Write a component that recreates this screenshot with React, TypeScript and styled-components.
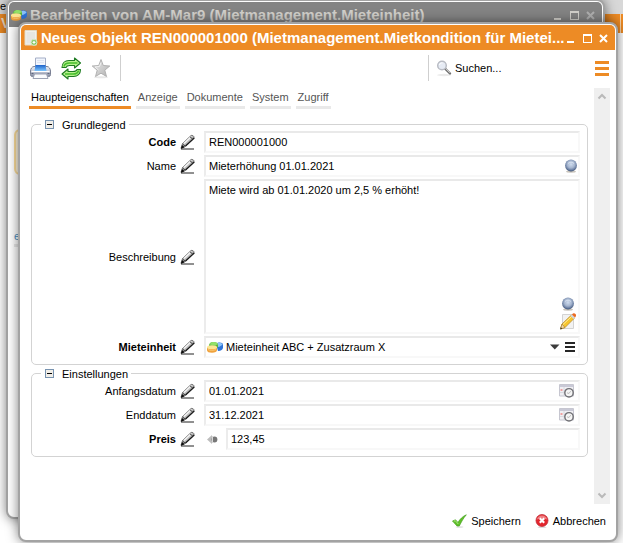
import React from "react";
import styled, { createGlobalStyle, css } from "styled-components";

const GlobalStyle = createGlobalStyle`
  *, *::before, *::after { box-sizing: border-box; }
  html, body { margin: 0; height: 100%; overflow: hidden; }
  body, button, input, textarea {
    font-family: "Liberation Sans", Arial, sans-serif;
    font-size: 11px;
    line-height: 14px;
    color: #000;
  }
`;

const orange = "#ed8b25";

/* ---------- desktop ---------- */

const Desktop = styled.main`
  position: relative;
  height: 100vh;
  overflow: hidden;
  background: #fff;
`;

const DesktopHead = styled.div`
  height: 14px;
  background: #d8d8d8;
  line-height: 13px;
`;

const DesktopBar = styled.div`
  display: flex;
  justify-content: space-between;
  height: 19px;
  padding: 0 2px 0 1px;
  background: ${orange};
  color: #f4e3cc;
  font-size: 14px;
  font-weight: bold;
  line-height: 19px;

  &::after {
    content: "";
    width: 1px;
    background: #f8d3a8;
  }
`;

const WindowFrame = styled.section<{ $front?: boolean }>`
  position: absolute;
  display: flex;
  flex-direction: column;
  padding: 1px;
  overflow: hidden;
  border: 2px solid #a3a3a3;
  border-radius: 8px;
  background: #fff;
  box-shadow: 0 0 12px rgba(0, 0, 0, 0.5);
  ${(p) =>
    p.$front
      ? css`
          inset: 22px 5px 1px 18px;
        `
      : css`
          inset: -1px 18px 24px 6px;
        `}
`;

const TitleBar = styled.header<{ $front?: boolean }>`
  display: flex;
  flex: none;
  align-items: center;
  height: 25px;
  padding: 0 7px 0 ${(p) => (p.$front ? 3 : 2)}px;
  border-radius: 5px 5px 0 0;
  background: ${(p) => (p.$front ? orange : "#848484")};
  color: ${(p) => (p.$front ? "#fff" : "#d2d0cb")};
`;

const Title = styled.h1`
  flex: 1;
  min-width: 0;
  margin: 0 0 0 3px;
  overflow: hidden;
  font-size: 15px;
  font-weight: bold;
  line-height: 20px;
  white-space: nowrap;
`;

const WindowButtons = styled.div`
  display: flex;
  gap: 7px;
`;

const IconButton = styled.button<{ $dim?: boolean }>`
  display: flex;
  flex: none;
  align-items: center;
  justify-content: center;
  padding: 0;
  border: 0;
  background: none;
  color: ${(p) => (p.$dim ? "#b0b0b0" : "inherit")};
  cursor: pointer;
  svg { display: block; }
`;

/* ---------- content of the rear window ---------- */

const RearContent = styled.div`
  display: flex;
  flex-direction: column;
  align-items: flex-start;
  padding: 102px 5px 0;
`;

const RearCard = styled.div`
  width: 60px;
  height: 46px;
  border: 2px solid #fbdc9a;
  border-radius: 6px;
  background: #fdf3dc;
`;

const RearTab = styled.a`
  margin-top: 54px;
  border-bottom: 3px solid #e8e8e8;
  color: #4b8fc0;
  line-height: 15px;
  text-decoration: none;
`;

/* ---------- toolbar ---------- */

const Toolbar = styled.div`
  display: flex;
  flex: none;
  align-items: center;
  height: 36px;
  padding: 0 6px 0 8px;
`;

const ToolGroup = styled.div`
  display: flex;
  flex: 1;
  align-items: center;
  gap: 9px;
`;

const Divider = styled.span`
  width: 1px;
  height: 26px;
  background: #cfcfcf;
`;

const SearchBox = styled.label`
  display: flex;
  align-items: center;
  gap: 2px;
  width: 166px;
  padding-left: 7px;
`;

const SearchInput = styled.input`
  width: 100px;
  padding: 0;
  border: 0;
  outline: 0;
  background: none;
  &::placeholder { color: #000; opacity: 1; }
`;

/* ---------- body ---------- */

const Body = styled.div`
  display: flex;
  flex: 1;
  min-height: 0;
  gap: 6px;
  padding: 2px 5px 0 8px;
`;

const Content = styled.div`
  flex: 1;
  min-width: 0;
  overflow: hidden;
`;

const Tabs = styled.nav`
  display: flex;
  gap: 5px;
  padding-top: 2px;
`;

const Tab = styled.a<{ $active?: boolean }>`
  padding: 0 2px 1px;
  border-bottom: 3px solid ${(p) => (p.$active ? orange : "#e9e9e9")};
  color: ${(p) => (p.$active ? "#000" : "#555")};
  line-height: 15px;
  text-decoration: none;
`;

const Form = styled.form`
  display: flex;
  flex-direction: column;
  gap: 2px;
  padding: 9px 0 0 2px;
`;

const Group = styled.fieldset`
  min-width: 0;
  margin: 0;
  padding: 0 7px 6px 0;
  border: 1px solid #d3d3d3;
  border-radius: 5px;
`;

const Legend = styled.legend`
  display: flex;
  align-items: center;
  gap: 8px;
  height: 13px;
  margin-left: 9px;
  padding: 0 3px 0 4px;
`;

const Rows = styled.div`
  display: flex;
  flex-direction: column;
  gap: 2px;
`;

const Row = styled.div`
  display: flex;
  align-items: center;
`;

const Label = styled.label<{ $strong?: boolean }>`
  width: 144px;
  margin-right: 4px;
  font-weight: ${(p) => (p.$strong ? "bold" : "normal")};
  text-align: right;
`;

const Field = styled.div<{ $tall?: boolean }>`
  display: flex;
  flex: 1;
  align-items: center;
  min-width: 0;
  height: ${(p) => (p.$tall ? 155 : 22)}px;
  margin-left: 8px;
  border: 2px solid;
  border-color: #e9e9e9 #f8f8f8 #f8f8f8 #ececec;
  background: #fff;
`;

const TextInput = styled.input`
  flex: 1;
  min-width: 0;
  padding: 0 3px;
  border: 0;
  outline: 0;
  background: none;
`;

const TextArea = styled.textarea`
  flex: 1;
  align-self: stretch;
  min-width: 0;
  padding: 2px 3px;
  border: 0;
  outline: 0;
  background: none;
  resize: none;
`;

const FieldTools = styled.div<{ $column?: boolean; $end?: number }>`
  display: flex;
  flex-direction: ${(p) => (p.$column ? "column" : "row")};
  align-self: ${(p) => (p.$column ? "flex-end" : "center")};
  align-items: center;
  gap: ${(p) => (p.$column ? 2 : 5)}px;
  padding: 0 ${(p) => p.$end ?? 3}px ${(p) => (p.$column ? 2 : 0)}px 0;
`;

const ScrollTrack = styled.div`
  display: flex;
  flex: none;
  flex-direction: column;
  justify-content: space-between;
  width: 16px;
  padding: 5px 0;
  background: #efefef;
  color: #b9b9b9;
`;

const Footer = styled.footer`
  display: flex;
  flex: none;
  justify-content: flex-end;
  gap: 14px;
  height: 34px;
  margin-bottom: 1px;
  padding-right: 9px;
`;

const ActionButton = styled.button`
  display: flex;
  align-items: center;
  gap: 4px;
  padding: 0;
  border: 0;
  background: none;
  cursor: pointer;
`;

/* ---------- icons ---------- */

const UnitIcon = () => (
  <svg width="16" height="14" viewBox="0 0 16 14" aria-hidden="true">
    <path d="M9 4c2-2 7-2 7 1v2.500c0 2-2 3.500-5 3.500z" fill="#2f74d8" />
    <path d="M10 3.500c2-1.500 5-.7 5.500 1.200L12 7l-2-.5z" fill="#8cc3f8" />
    <path d="M2 5.500C2 3 4 2 6.500 2S11 3 11 5v2.500H2z" fill="#58b53d" />
    <path d="M2.500 4.500C3.500 2.500 5 2 7 2s3.500.7 3.700 2.200L8 5.500z" fill="#92e068" />
    <path d="M0 7v3.300C0 12 2 12.800 5 12.800s5-1 5-2.700V7z" fill="#f0a23c" />
    <ellipse cx="5" cy="7.300" rx="5" ry="2" fill="#fde694" />
    <path d="M1 9.500c1.500 1.300 6 1.300 8 0" fill="none" stroke="#f8c570" />
  </svg>
);

const NewDocIcon = () => (
  <svg width="14" height="16" viewBox="0 0 14 16" aria-hidden="true">
    <path d="M1 .5h11.500v14.500H1z" fill="#f1f0ea" stroke="#e2d9c6" />
    <path d="M2.500 2h8.500v8L7 13.500H2.500z" fill="#e6e6e2" />
    <circle cx="10" cy="12.300" r="3" fill="#7cc457" stroke="#d4e8c4" />
    <path d="M10 10.800v3M8.500 12.300h3" stroke="#fff" strokeWidth="1.200" />
  </svg>
);

const MinimizeIcon = () => (
  <svg width="10" height="12" viewBox="0 0 10 12" aria-hidden="true">
    <path d="M1 9h7v2H1z" fill="currentColor" />
  </svg>
);
const MaximizeIcon = () => (
  <svg width="9" height="12" viewBox="0 0 9 12" aria-hidden="true">
    <path d="M0 2h9v9H0zm1 2v6h7V4z" fill="currentColor" fillRule="evenodd" />
  </svg>
);
const CloseIcon = () => (
  <svg width="9" height="12" viewBox="0 0 9 12" aria-hidden="true">
    <path d="M1 3l7 7M8 3l-7 7" stroke="currentColor" strokeWidth="2" />
  </svg>
);

const PrinterIcon = () => (
  <svg width="23" height="23" viewBox="0 0 23 23" aria-hidden="true">
    <defs>
      <linearGradient id="printerBody" x1="0" y1="0" x2="0" y2="1">
        <stop offset="0" stopColor="#eef0f5" />
        <stop offset=".5" stopColor="#c3c8d6" />
        <stop offset="1" stopColor="#7f879d" />
      </linearGradient>
      <linearGradient id="printerGlow" x1="0" y1="0" x2="0" y2="1">
        <stop offset="0" stopColor="#1d62c9" />
        <stop offset="1" stopColor="#7cc6ff" />
      </linearGradient>
    </defs>
    <path d="M5 9.500C3 9.500 1.500 12 1.500 14v3.500c0 1.500.8 2 2 2h16c1.200 0 2-.5 2-2V14c0-2-1.500-4.500-3.500-4.500z" fill="url(#printerBody)" stroke="#7b8195" />
    <path d="M6.500 1h10v9h-10z" fill="#f1f5fd" stroke="#a4aec6" />
    <path d="M8 3.500h7M8 5.500h7" stroke="#dde4f2" />
    <path d="M6.500 8h10l1 6h-12z" fill="url(#printerGlow)" />
    <path d="M2.500 14.500h18" stroke="#fff" />
    <path d="M5.500 17h12l1.500 4.500H4z" fill="#fafbfd" stroke="#9ca2b4" />
    <path d="M2.500 16.500h2M18.500 16.500h2" stroke="#5d657c" />
  </svg>
);

const RefreshIcon = () => (
  <svg width="21" height="23" viewBox="0 0 21 23" aria-hidden="true">
    <g fill="#b5f18b" stroke="#1d7a22" strokeWidth="1.100" strokeLinejoin="round">
      <path d="M1 10.500C1 6 4 3.500 8 3.500h5.500V1l6 5-6 5V8.500H8.500C6 8.500 5.500 9 5 10.500z" />
      <path d="M19.500 12.500c0 4.500-3 7-7 7H7V22l-6-5 6-5v2.500h5c2.500 0 3.500-.5 4-2z" />
    </g>
    <path d="M3 9.500C3.500 7 5.500 6 8.500 6h8M17.500 13.500c-.5 2.500-2.500 3.500-5.500 3.500H4" fill="none" stroke="#46bd2d" strokeWidth="1.600" />
  </svg>
);

const StarIcon = () => (
  <svg width="20" height="21" viewBox="0 0 20 21" aria-hidden="true">
    <defs>
      <linearGradient id="starFill" x1="0" y1="0" x2="1" y2="1">
        <stop offset="0" stopColor="#dcdcdc" />
        <stop offset=".5" stopColor="#d0d0d0" />
        <stop offset="1" stopColor="#b0b0b0" />
      </linearGradient>
    </defs>
    <ellipse cx="10" cy="19.300" rx="7" ry="1" fill="#e8e8e8" />
    <path d="M10 1.500l2.300 6 6.500.5-5 4.200 1.700 6.300-5.500-3.300-5.500 3.300 1.700-6.300-5-4.200 6.500-.5z" fill="url(#starFill)" stroke="#ababab" strokeWidth=".9" strokeLinejoin="round" />
    <path d="M10 4.500l-1.500 4-4.500.5 3.500 3" fill="none" stroke="#f2f2f2" />
  </svg>
);

const SearchIcon = () => (
  <svg width="17" height="18" viewBox="0 0 17 18" aria-hidden="true">
    <ellipse cx="8" cy="16" rx="7" ry="1.200" fill="#ebebeb" />
    <path d="M9 9.500l5 5" stroke="#707070" strokeWidth="2.400" strokeLinecap="round" />
    <path d="M10 9.800l4 4" stroke="#ddd" />
    <circle cx="6" cy="6.500" r="4.300" fill="#e6ebf4" stroke="#b9bcc4" strokeWidth="1.500" />
    <path d="M3.500 6c.2-1.500 1.500-2.300 3-2" stroke="#fff" fill="none" />
  </svg>
);

const MenuIcon = () => (
  <svg width="14" height="15" viewBox="0 0 14 15" aria-hidden="true">
    <path d="M0 0h14v3H0zM0 6h14v3H0zM0 12h14v3H0z" fill={orange} />
  </svg>
);

const CollapseIcon = () => (
  <svg width="9" height="9" viewBox="0 0 9 9" aria-hidden="true">
    <rect x=".5" y=".5" width="8" height="8" fill="#f1eee8" stroke="#7893b0" />
    <path d="M2 4h5v1H2z" fill="#000" />
  </svg>
);

const EditIcon = () => (
  <svg width="16" height="16" viewBox="0 0 16 16" aria-hidden="true">
    <path d="M1 15h13" stroke="#222" />
    <path d="M1 14L2.500 9.500 11 1.500c1-.8 3.700.7 3 2.500L6 12z" fill="#b9b9b9" stroke="#6a6a6a" strokeWidth=".8" strokeLinejoin="round" />
    <path d="M4 9.500l7.500-7" stroke="#f4f4f4" strokeWidth="1.600" />
    <path d="M5.500 12L14.300 4" stroke="#1b1b1b" strokeWidth="1.300" />
    <path d="M.7 15l1.300-4 2.800 2.200z" fill="#0c0c0c" />
    <path d="M2.500 10l2.800 2.300M10 2.800l2.800 2.300" stroke="#3a3a3a" />
  </svg>
);

const GlobeIcon = () => (
  <svg width="12" height="14" viewBox="0 0 12 14" aria-hidden="true">
    <defs>
      <radialGradient id="globeFill" cx=".5" cy=".4" r=".62">
        <stop offset="0" stopColor="#cfdcee" />
        <stop offset=".5" stopColor="#a4b4ce" />
        <stop offset=".8" stopColor="#667b9f" />
        <stop offset="1" stopColor="#34486a" />
      </radialGradient>
    </defs>
    <ellipse cx="6" cy="12.600" rx="5" ry="1.200" fill="#c9c4bc" />
    <circle cx="6" cy="6.500" r="5.900" fill="url(#globeFill)" />
    <path d="M3 4.500c1.500-1.800 4.500-1.800 6 0" fill="none" stroke="#e6eef9" strokeOpacity=".7" />
  </svg>
);

const PencilIcon = () => (
  <svg width="16" height="17" viewBox="0 0 16 17" aria-hidden="true">
    <path d="M2.500 1.500h11v14h-11z" fill="#f2f2f2" stroke="#d3d3d3" />
    <path d="M.5 16l1.500-5L11.500 2l3 3L5 14.500z" fill="#f7c62e" stroke="#b98a2c" strokeWidth=".8" />
    <path d="M3 11.500l9-8.500" stroke="#fff0a0" />
    <path d="M.5 16l1.500-5 3 3.500z" fill="#f2d8ac" stroke="#a9812c" strokeWidth=".7" />
    <path d="M10.500 3l3 3 1.500-1.500-3-3z" fill="#d0d5dd" />
    <path d="M12 1.500C13 0 14.500 0 15.500 1s.5 2.500-.5 3.500z" fill="#ec6a20" />
    <path d="M.3 16.300l.5-2 1.500 1.500z" fill="#333" />
  </svg>
);

const DropIcon = () => (
  <svg width="10" height="6" viewBox="0 0 10 6" aria-hidden="true">
    <path d="M0 .5h9.500L4.800 5.500z" fill="#3c3c3c" />
  </svg>
);

const ListIcon = () => (
  <svg width="10" height="10" viewBox="0 0 10 10" aria-hidden="true">
    <path d="M0 0h10v2H0zM0 4h10v2H0zM0 8h10v2H0z" fill="#262626" />
  </svg>
);

const CalendarIcon = () => (
  <svg width="16" height="14" viewBox="0 0 16 14" aria-hidden="true">
    <path d="M.5.500h14v11.500H.5z" fill="#efeff3" stroke="#c6c6d0" />
    <path d="M1 1h13v2H1z" fill="#c9c9d6" />
    <path d="M1.500 5h2v2h-2z" fill="#f0a0a0" />
    <path d="M5 3v9M1 8.500h5" stroke="#dadae0" />
    <circle cx="10" cy="8.800" r="4.200" fill="#f5f5f5" stroke="#6f6f74" strokeWidth="1.400" />
    <path d="M8 8.800l2 .7 1.700-2.300" fill="none" stroke="#bdbdbd" />
  </svg>
);

const CurrencyIcon = () => (
  <svg width="11" height="9" viewBox="0 0 11 9" aria-hidden="true">
    <path d="M5 0v9L0 4.500z" fill="#bdbdbd" />
    <circle cx="7.500" cy="4.500" r="2.900" fill="#777" />
    <path d="M5.500 1v7" stroke="#d8d8d8" />
  </svg>
);

const ChevronIcon = ({ up }: { up?: boolean }) => (
  <svg width="10" height="7" viewBox="0 0 10 7" aria-hidden="true">
    <path d={up ? "M1.500 5.500L5 2l3.500 3.500" : "M1.500 1.500L5 5l3.500-3.500"} fill="none" stroke="currentColor" strokeWidth="2" />
  </svg>
);

const CheckIcon = () => (
  <svg width="15" height="14" viewBox="0 0 15 14" aria-hidden="true">
    <ellipse cx="7.500" cy="13" rx="4" ry=".8" fill="#dcdcdc" />
    <path d="M.5 7L3.500 5.800l2.500 2.700C8 5 10.500 2.500 14.300.8 11.500 4 9.300 8 7.300 12H5z" fill="#5fbf28" stroke="#43a01d" strokeWidth=".7" />
    <path d="M1.800 7.200l1.500-.5 3 3.300" fill="none" stroke="#a9e780" />
  </svg>
);

const CancelIcon = () => (
  <svg width="14" height="14" viewBox="0 0 14 14" aria-hidden="true">
    <ellipse cx="7" cy="13.200" rx="4.500" ry=".8" fill="#dadada" />
    <circle cx="7" cy="6.500" r="6" fill="#e3262e" stroke="#c2303a" strokeWidth=".8" />
    <path d="M2 5.500a5 4 0 0 1 10 0q-5-2-10 0z" fill="#f07f82" />
    <path d="M4.800 4.300l4.400 4.400M9.200 4.300L4.800 8.700" stroke="#fff" strokeWidth="2.200" />
  </svg>
);

/* ---------- composed parts ---------- */

const WindowControls = ({ dim }: { dim?: boolean }) => (
  <WindowButtons>
    <IconButton type="button" aria-label="Minimieren"><MinimizeIcon /></IconButton>
    <IconButton type="button" aria-label="Maximieren"><MaximizeIcon /></IconButton>
    <IconButton type="button" aria-label="Schließen" $dim={dim}><CloseIcon /></IconButton>
  </WindowButtons>
);

type FormRowProps = {
  id: string;
  label: string;
  strong?: boolean;
  children: React.ReactNode;
};

const FormRow = ({ id, label, strong, children }: FormRowProps) => (
  <Row>
    <Label htmlFor={id} $strong={strong}>{label}</Label>
    <IconButton type="button" aria-label={`${label} bearbeiten`}><EditIcon /></IconButton>
    {children}
  </Row>
);

const FormGroup = ({ title, children }: { title: string; children: React.ReactNode }) => (
  <Group>
    <Legend>
      <IconButton type="button" aria-label={`${title} einklappen`}><CollapseIcon /></IconButton>
      {title}
    </Legend>
    <Rows>{children}</Rows>
  </Group>
);

const DateField = ({ id, value }: { id: string; value: string }) => (
  <Field>
    <TextInput id={id} defaultValue={value} />
    <FieldTools>
      <IconButton type="button" aria-label="Kalender"><CalendarIcon /></IconButton>
    </FieldTools>
  </Field>
);

const UnitField = styled(Field)`
  padding-left: 1px;
`;

const Spacer = styled.span`
  display: flex;
  margin-left: 11px;
`;

const tabs = ["Haupteigenschaften", "Anzeige", "Dokumente", "System", "Zugriff"];

export default function App() {
  return (
    <Desktop>
      <GlobalStyle />
      <DesktopHead>er</DesktopHead>
      <DesktopBar>V</DesktopBar>

      <WindowFrame>
        <TitleBar>
          <UnitIcon />
          <Title>Bearbeiten von AM-Mar9 (Mietmanagement.Mieteinheit)</Title>
          <WindowControls dim />
        </TitleBar>
        <RearContent>
          <RearCard />
          <RearTab href="#e">e</RearTab>
        </RearContent>
      </WindowFrame>

      <WindowFrame $front>
        <TitleBar $front>
          <NewDocIcon />
          <Title>Neues Objekt REN000001000 (Mietmanagement.Mietkondition für Mietei...</Title>
          <WindowControls />
        </TitleBar>

        <Toolbar>
          <ToolGroup>
            <IconButton type="button" aria-label="Drucken"><PrinterIcon /></IconButton>
            <IconButton type="button" aria-label="Aktualisieren"><RefreshIcon /></IconButton>
            <IconButton type="button" aria-label="Favorit"><StarIcon /></IconButton>
            <Divider />
          </ToolGroup>
          <Divider />
          <SearchBox>
            <SearchIcon />
            <SearchInput type="search" placeholder="Suchen..." aria-label="Suchen" />
          </SearchBox>
          <IconButton type="button" aria-label="Menü"><MenuIcon /></IconButton>
        </Toolbar>

        <Body>
          <Content>
            <Tabs>
              {tabs.map((name, i) => (
                <Tab key={name} href={`#${name}`} $active={i === 0}>{name}</Tab>
              ))}
            </Tabs>
            <Form id="condition" onSubmit={(e) => e.preventDefault()}>
              <FormGroup title="Grundlegend">
                <FormRow id="code" label="Code" strong>
                  <Field><TextInput id="code" defaultValue="REN000001000" /></Field>
                </FormRow>
                <FormRow id="name" label="Name">
                  <Field>
                    <TextInput id="name" defaultValue="Mieterhöhung 01.01.2021" />
                    <FieldTools $end={1}>
                      <IconButton type="button" aria-label="Name übersetzen"><GlobeIcon /></IconButton>
                    </FieldTools>
                  </Field>
                </FormRow>
                <FormRow id="description" label="Beschreibung">
                  <Field $tall>
                    <TextArea id="description" defaultValue="Miete wird ab 01.01.2020 um 2,5 % erhöht!" />
                    <FieldTools $column $end={2}>
                      <IconButton type="button" aria-label="Beschreibung übersetzen"><GlobeIcon /></IconButton>
                      <IconButton type="button" aria-label="Text bearbeiten"><PencilIcon /></IconButton>
                    </FieldTools>
                  </Field>
                </FormRow>
                <FormRow id="unit" label="Mieteinheit" strong>
                  <UnitField>
                    <UnitIcon />
                    <TextInput id="unit" defaultValue="Mieteinheit ABC + Zusatzraum X" />
                    <FieldTools>
                      <IconButton type="button" aria-label="Auswahl öffnen"><DropIcon /></IconButton>
                      <IconButton type="button" aria-label="Menü der Mieteinheit"><ListIcon /></IconButton>
                    </FieldTools>
                  </UnitField>
                </FormRow>
              </FormGroup>
              <FormGroup title="Einstellungen">
                <FormRow id="start" label="Anfangsdatum"><DateField id="start" value="01.01.2021" /></FormRow>
                <FormRow id="end" label="Enddatum"><DateField id="end" value="31.12.2021" /></FormRow>
                <FormRow id="price" label="Preis" strong>
                  <Spacer>
                    <IconButton type="button" aria-label="Währung"><CurrencyIcon /></IconButton>
                  </Spacer>
                  <Field><TextInput id="price" defaultValue="123,45" /></Field>
                </FormRow>
              </FormGroup>
            </Form>
          </Content>
          <ScrollTrack>
            <IconButton type="button" aria-label="Nach oben"><ChevronIcon up /></IconButton>
            <IconButton type="button" aria-label="Nach unten"><ChevronIcon /></IconButton>
          </ScrollTrack>
        </Body>

        <Footer>
          <ActionButton type="submit" form="condition"><CheckIcon />Speichern</ActionButton>
          <ActionButton type="button"><CancelIcon />Abbrechen</ActionButton>
        </Footer>
      </WindowFrame>
    </Desktop>
  );
}
